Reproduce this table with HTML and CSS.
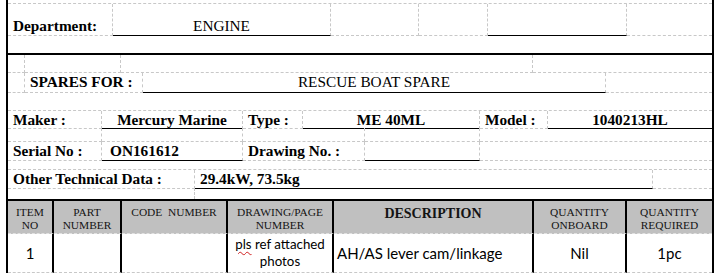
FILE: index.html
```html
<!DOCTYPE html>
<html>
<head>
<meta charset="utf-8">
<link rel="stylesheet" href="styles.css">
</head>
<body>
<div class="sheet">
  <div class="row r-a"><div class="c nr"></div></div>

  <div class="row r-b">
    <div class="c lbl">Department:</div>
    <div class="c u val">ENGINE</div>
    <div class="c"></div>
    <div class="c"></div>
    <div class="c u"></div>
    <div class="c nr"></div>
  </div>

  <div class="row r-c"></div>
  <div class="rule"></div>

  <div class="row r-d">
    <div class="c"></div>
    <div class="c"></div>
    <div class="c"></div>
    <div class="c nr"></div>
  </div>

  <div class="row r-e">
    <div class="c"></div>
    <div class="c lbl">SPARES FOR :</div>
    <div class="c u val">RESCUE BOAT SPARE</div>
    <div class="c nr"></div>
  </div>

  <div class="row r-f"><div class="c nr"></div></div>

  <div class="row r-g">
    <div class="c lbl">Maker :</div>
    <div class="c u val b">Mercury Marine</div>
    <div class="c lbl">Type :</div>
    <div class="c u val b">ME 40ML</div>
    <div class="c lbl">Model :</div>
    <div class="c u val b nr">1040213HL</div>
  </div>

  <div class="row r-h">
    <div class="c"></div>
    <div class="c"></div>
    <div class="c"></div>
    <div class="c"></div>
    <div class="c nr"></div>
  </div>

  <div class="row r-h r-i">
    <div class="c lbl">Serial No :</div>
    <div class="c u lbl sn">ON161612</div>
    <div class="c lbl">Drawing No. :</div>
    <div class="c u"></div>
    <div class="c nr"></div>
  </div>

  <div class="row r-j"><div class="c nr"></div></div>

  <div class="row r-k">
    <div class="c lbl">Other Technical Data :</div>
    <div class="c u lbl">29.4kW, 73.5kg</div>
    <div class="c nr"></div>
  </div>

  <div class="row r-l">
    <div class="c nb"></div>
    <div class="c nb nr"></div>
  </div>

  <div class="rule"></div>

  <div class="row thead">
    <div class="th">ITEM<br>NO</div>
    <div class="th">PART<br>NUMBER</div>
    <div class="th pre">CODE  NUMBER</div>
    <div class="th">DRAWING/PAGE<br>NUMBER</div>
    <div class="th desc">DESCRIPTION</div>
    <div class="th">QUANTITY<br>ONBOARD</div>
    <div class="th last">QUANTITY<br>REQUIRED</div>
  </div>

  <div class="row tbody">
    <div class="td ctr">1</div>
    <div class="td"></div>
    <div class="td"></div>
    <div class="td ctr two"><span><span class="sp">pls</span> ref attached</span><span>photos</span></div>
    <div class="td left">AH/AS lever cam/linkage</div>
    <div class="td ctr">Nil</div>
    <div class="td ctr last">1pc</div>
  </div>
</div>
</body>
</html>
```

FILE: styles.css
```css
* { box-sizing: border-box; }

html, body {
  margin: 0;
  padding: 0;
  background: #ffffff;
}

body {
  font-family: "Liberation Serif", "Times New Roman", serif;
  color: #000;
  height: 276px;
  overflow: hidden;
}

.sheet {
  margin-left: 6px;
  width: 708px;
  border-left: 2px solid #000;
  border-right: 2px solid #000;
}

.row {
  display: grid;
}

.c {
  border-right: 1px dashed #c8c8c8;
  border-bottom: 1px dashed #c8c8c8;
  display: flex;
  align-items: flex-end;
  min-width: 0;
  white-space: nowrap;
}

.c.nr { border-right: none; }
.c.nb { border-bottom: none; }
.c.u { border-bottom: 1px solid #000; }

.lbl {
  font-weight: bold;
  font-size: 15.3px;
  line-height: 17px;
  padding: 0 0 1px 5px;
}

.val {
  justify-content: center;
  font-size: 15.3px;
  line-height: 17px;
  padding-bottom: 1px;
}

.val.b { font-weight: bold; }
.sn { padding-left: 8px; }

.r-a { height: 4px; grid-template-columns: 1fr; }
.r-b { height: 32px; grid-template-columns: 105px 218px 88px 69px 139px 85px; }
.r-c { height: 17px; }
.rule { height: 2px; background: #000; }
.r-d { height: 18px; grid-template-columns: 17px 96px 412px 179px; }
.r-e { height: 19px; grid-template-columns: 17px 118px 463px 106px; }
.r-e .lbl, .r-e .val { padding-bottom: 2px; }
.r-f { height: 19px; grid-template-columns: 1fr; }
.r-g { height: 17px; grid-template-columns: 94px 141px 60px 177px 68px 164px; }
.r-g .lbl, .r-g .val { padding-bottom: 0; }
.r-h { height: 14px; grid-template-columns: 94px 141px 122px 115px 232px; }
.r-i { height: 18px; }
.r-j { height: 10px; grid-template-columns: 1fr; }
.r-k { height: 18px; grid-template-columns: 187px 458px 59px; }
.r-l { height: 11px; grid-template-columns: 187px 517px; }

.thead, .tbody {
  grid-template-columns: 46px 68px 106px 106px 200px 93px 85px;
}

.thead {
  height: 33px;
  background: #c0c0c0;
}

.th {
  border-right: 2px solid #000;
  border-bottom: 1px dashed #e2e2e2;
  text-align: center;
  font-size: 11.4px;
  line-height: 13px;
  padding-top: 5px;
  color: #141414;
  white-space: nowrap;
}

.th.pre { white-space: pre; }

.th.desc {
  font-size: 14px;
  font-weight: bold;
  line-height: 16px;
  padding-top: 5px;
}

.th.last, .td.last { border-right: none; }

.tbody { height: 39px; }

.td {
  border-right: 2px solid #000;
  border-bottom: 1px dashed #c8c8c8;
  font-family: Lato, "Open Sans", sans-serif;
  font-size: 15px;
  display: flex;
  align-items: center;
  white-space: nowrap;
}

.td.ctr { justify-content: center; }
.td.left { padding-left: 3px; }

.td.two {
  flex-direction: column;
  justify-content: center;
  font-size: 13.3px;
  line-height: 17px;
  padding-bottom: 1px;
}

.sp {
  text-decoration: underline wavy #d02020;
  text-decoration-thickness: 1px;
  text-underline-offset: 2px;
}
```
